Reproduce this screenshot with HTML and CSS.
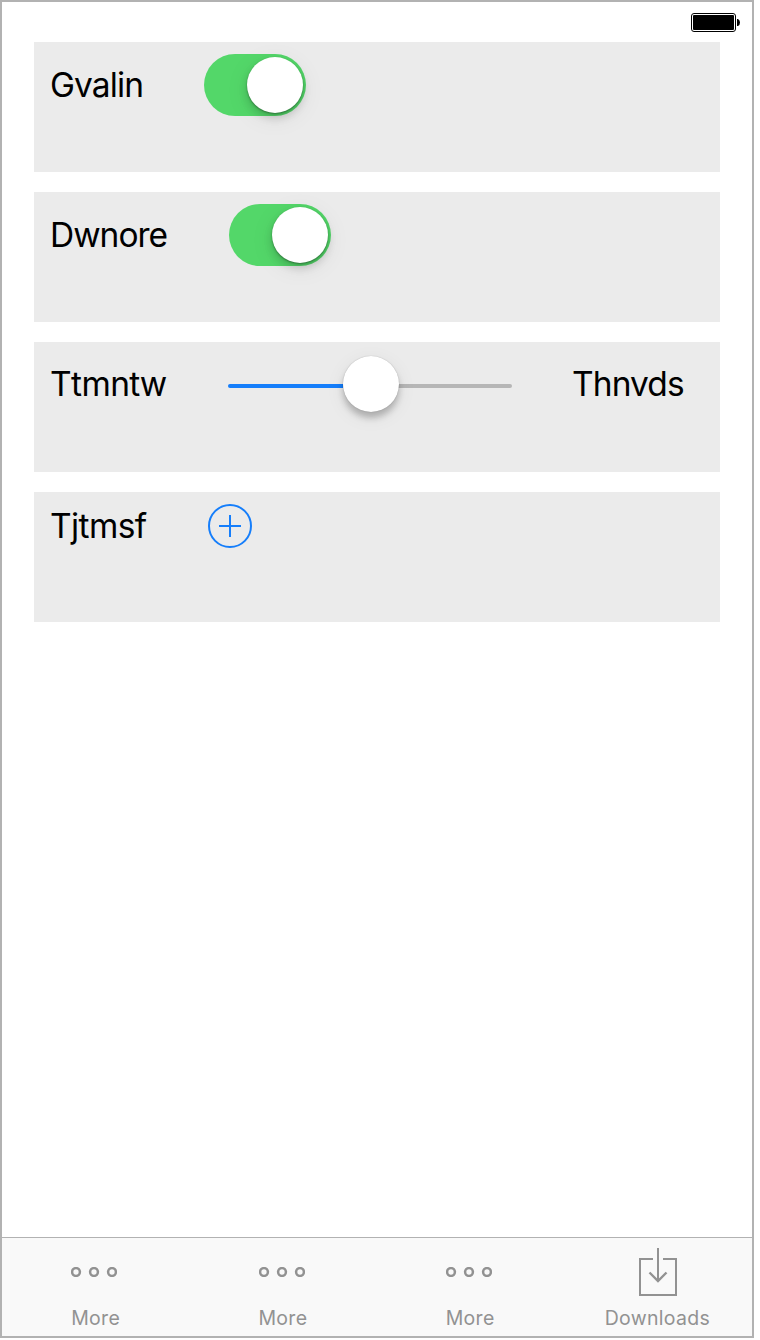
FILE: index.html
```html
<!DOCTYPE html>
<html lang="en">
<head>
<meta charset="utf-8">
<title>Settings</title>
<link rel="stylesheet" href="styles.css">
</head>
<body>
<div class="screen">
  <header class="status">
    <svg class="battery" width="50" height="20" viewBox="0 0 50 20">
      <rect x="0.5" y="0.5" width="44" height="18" rx="2.5" fill="#fff" stroke="#000"/>
      <rect x="2" y="2" width="41" height="15" rx="1"/>
      <path d="M46 6h1q2 1 2 3.500t-2 3.500h-1z"/>
    </svg>
  </header>
  <main class="cards">
    <section class="card">
      <span class="label gvalin">Gvalin</span>
      <span class="toggle"><span class="knob"></span></span>
    </section>
    <section class="card">
      <span class="label dwnore">Dwnore</span>
      <span class="toggle"><span class="knob"></span></span>
    </section>
    <section class="card slider-card">
      <span class="label ttmntw">Ttmntw</span>
      <span class="slider"><span class="fill"></span><span class="knob thumb"></span><span class="rest"></span></span>
      <span class="label thnvds">Thnvds</span>
    </section>
    <section class="card add-card">
      <span class="label tjtmsf">Tjtmsf</span>
      <svg class="add" width="44" height="44" viewBox="0 0 44 44" fill="none" stroke="#157efb" stroke-width="2">
        <circle cx="22" cy="22" r="21"/><path d="M11 22h22M22 11v22"/>
      </svg>
    </section>
  </main>
  <nav class="tabs">
    <div class="tab"><div class="icon dots"><svg width="46" height="10" viewBox="0 0 46 10"><use href="#rings"/></svg></div><span class="caption">More</span></div>
    <div class="tab"><div class="icon dots"><svg width="46" height="10" viewBox="0 0 46 10"><use href="#rings"/></svg></div><span class="caption">More</span></div>
    <div class="tab"><div class="icon dots"><svg width="46" height="10" viewBox="0 0 46 10"><g id="rings" fill="none" stroke="#929292" stroke-width="2.500"><circle cx="5" cy="5" r="3.900"/><circle cx="23" cy="5" r="3.900"/><circle cx="41" cy="5" r="3.900"/></g></svg></div><span class="caption">More</span></div>
    <div class="tab"><div class="icon download">
      <svg width="38" height="48" viewBox="0 0 38 48" fill="none" stroke="#929292" stroke-width="2">
        <path d="M14 11H1v36h36V11H24M19 0v33"/><path stroke-width="2.400" d="M10.500 24.500l8.500 8.500 8.500-8.500"/>
      </svg></div><span class="caption">Downloads</span></div>
  </nav>
</div>
</body>
</html>
```

FILE: styles.css
```css
* { box-sizing: border-box; }
body { margin: 0; background: #fff; font-family: Inter, "Liberation Sans", sans-serif; color: #000; }
svg { display: block; }
.screen { width: 754px; height: 1338px; border: 2px solid #b2b2b2; display: flex; flex-direction: column; }
.status { height: 40px; padding: 11px 11px 0 0; display: flex; justify-content: flex-end; }
.cards { flex: 1; padding: 0 32px; display: flex; flex-direction: column; gap: 20px; }
.card { height: 130px; background: #ebebeb; padding: 12px 0 0 16px; display: flex; align-items: flex-start; }
.label { font-size: 33.500px; line-height: 40px; margin-top: 11px; white-space: nowrap; flex: none; }
.gvalin { width: 154px; letter-spacing: -0.9px; }
.dwnore { width: 179px; letter-spacing: -1px; }
.slider-card .label { margin-top: 10px; }
.ttmntw { width: 178px; font-kerning: none; letter-spacing: -0.6px; }
.thnvds { margin-left: 60px; letter-spacing: -0.9px; }
.tjtmsf { width: 158px; letter-spacing: -0.6px; }
.add-card .label { margin-top: 2px; }
.toggle { width: 102px; height: 62px; border-radius: 31px; background: #53d769; padding: 3px; display: flex; justify-content: flex-end; }
.knob { width: 56px; height: 56px; border-radius: 50%; background: #fff; flex: none; box-shadow: 0 1px 2px rgba(0,0,0,.35), 0 5px 8px rgba(0,0,0,.16), 0 5px 24px rgba(0,0,0,.08); }
.slider { width: 284px; height: 60px; display: flex; align-items: center; margin-top: 2px; }
.fill, .rest { height: 4px; flex: 1; }
.fill { background: #157efb; border-radius: 2px 0 0 2px; }
.rest { background: #b6b6b6; border-radius: 0 2px 2px 0; }
.slider .thumb { position: relative; margin: 0 -1px 4px 1px; box-shadow: 0 0 1px rgba(0,0,0,.3), 0 6px 6px rgba(0,0,0,.22), 0 5px 20px rgba(0,0,0,.07); }
.slider .fill { margin-right: -2px; }
.slider .thumb { margin-left: 2px; }
.tabs { height: 99px; border-top: 1px solid #b2b2b2; background: #f9f9f9; display: flex; padding-right: 1px; }
.tab { flex: 1; display: flex; flex-direction: column; align-items: center; padding-top: 10px; }
.icon { height: 48px; display: flex; justify-content: center; }
.dots { align-items: center; margin-right: 2.400px; }
.download { margin-left: 1.200px; }
.caption { font-size: 19.500px; line-height: 24px; margin-top: 10px; color: #929292; letter-spacing: 0.3px; }
```
